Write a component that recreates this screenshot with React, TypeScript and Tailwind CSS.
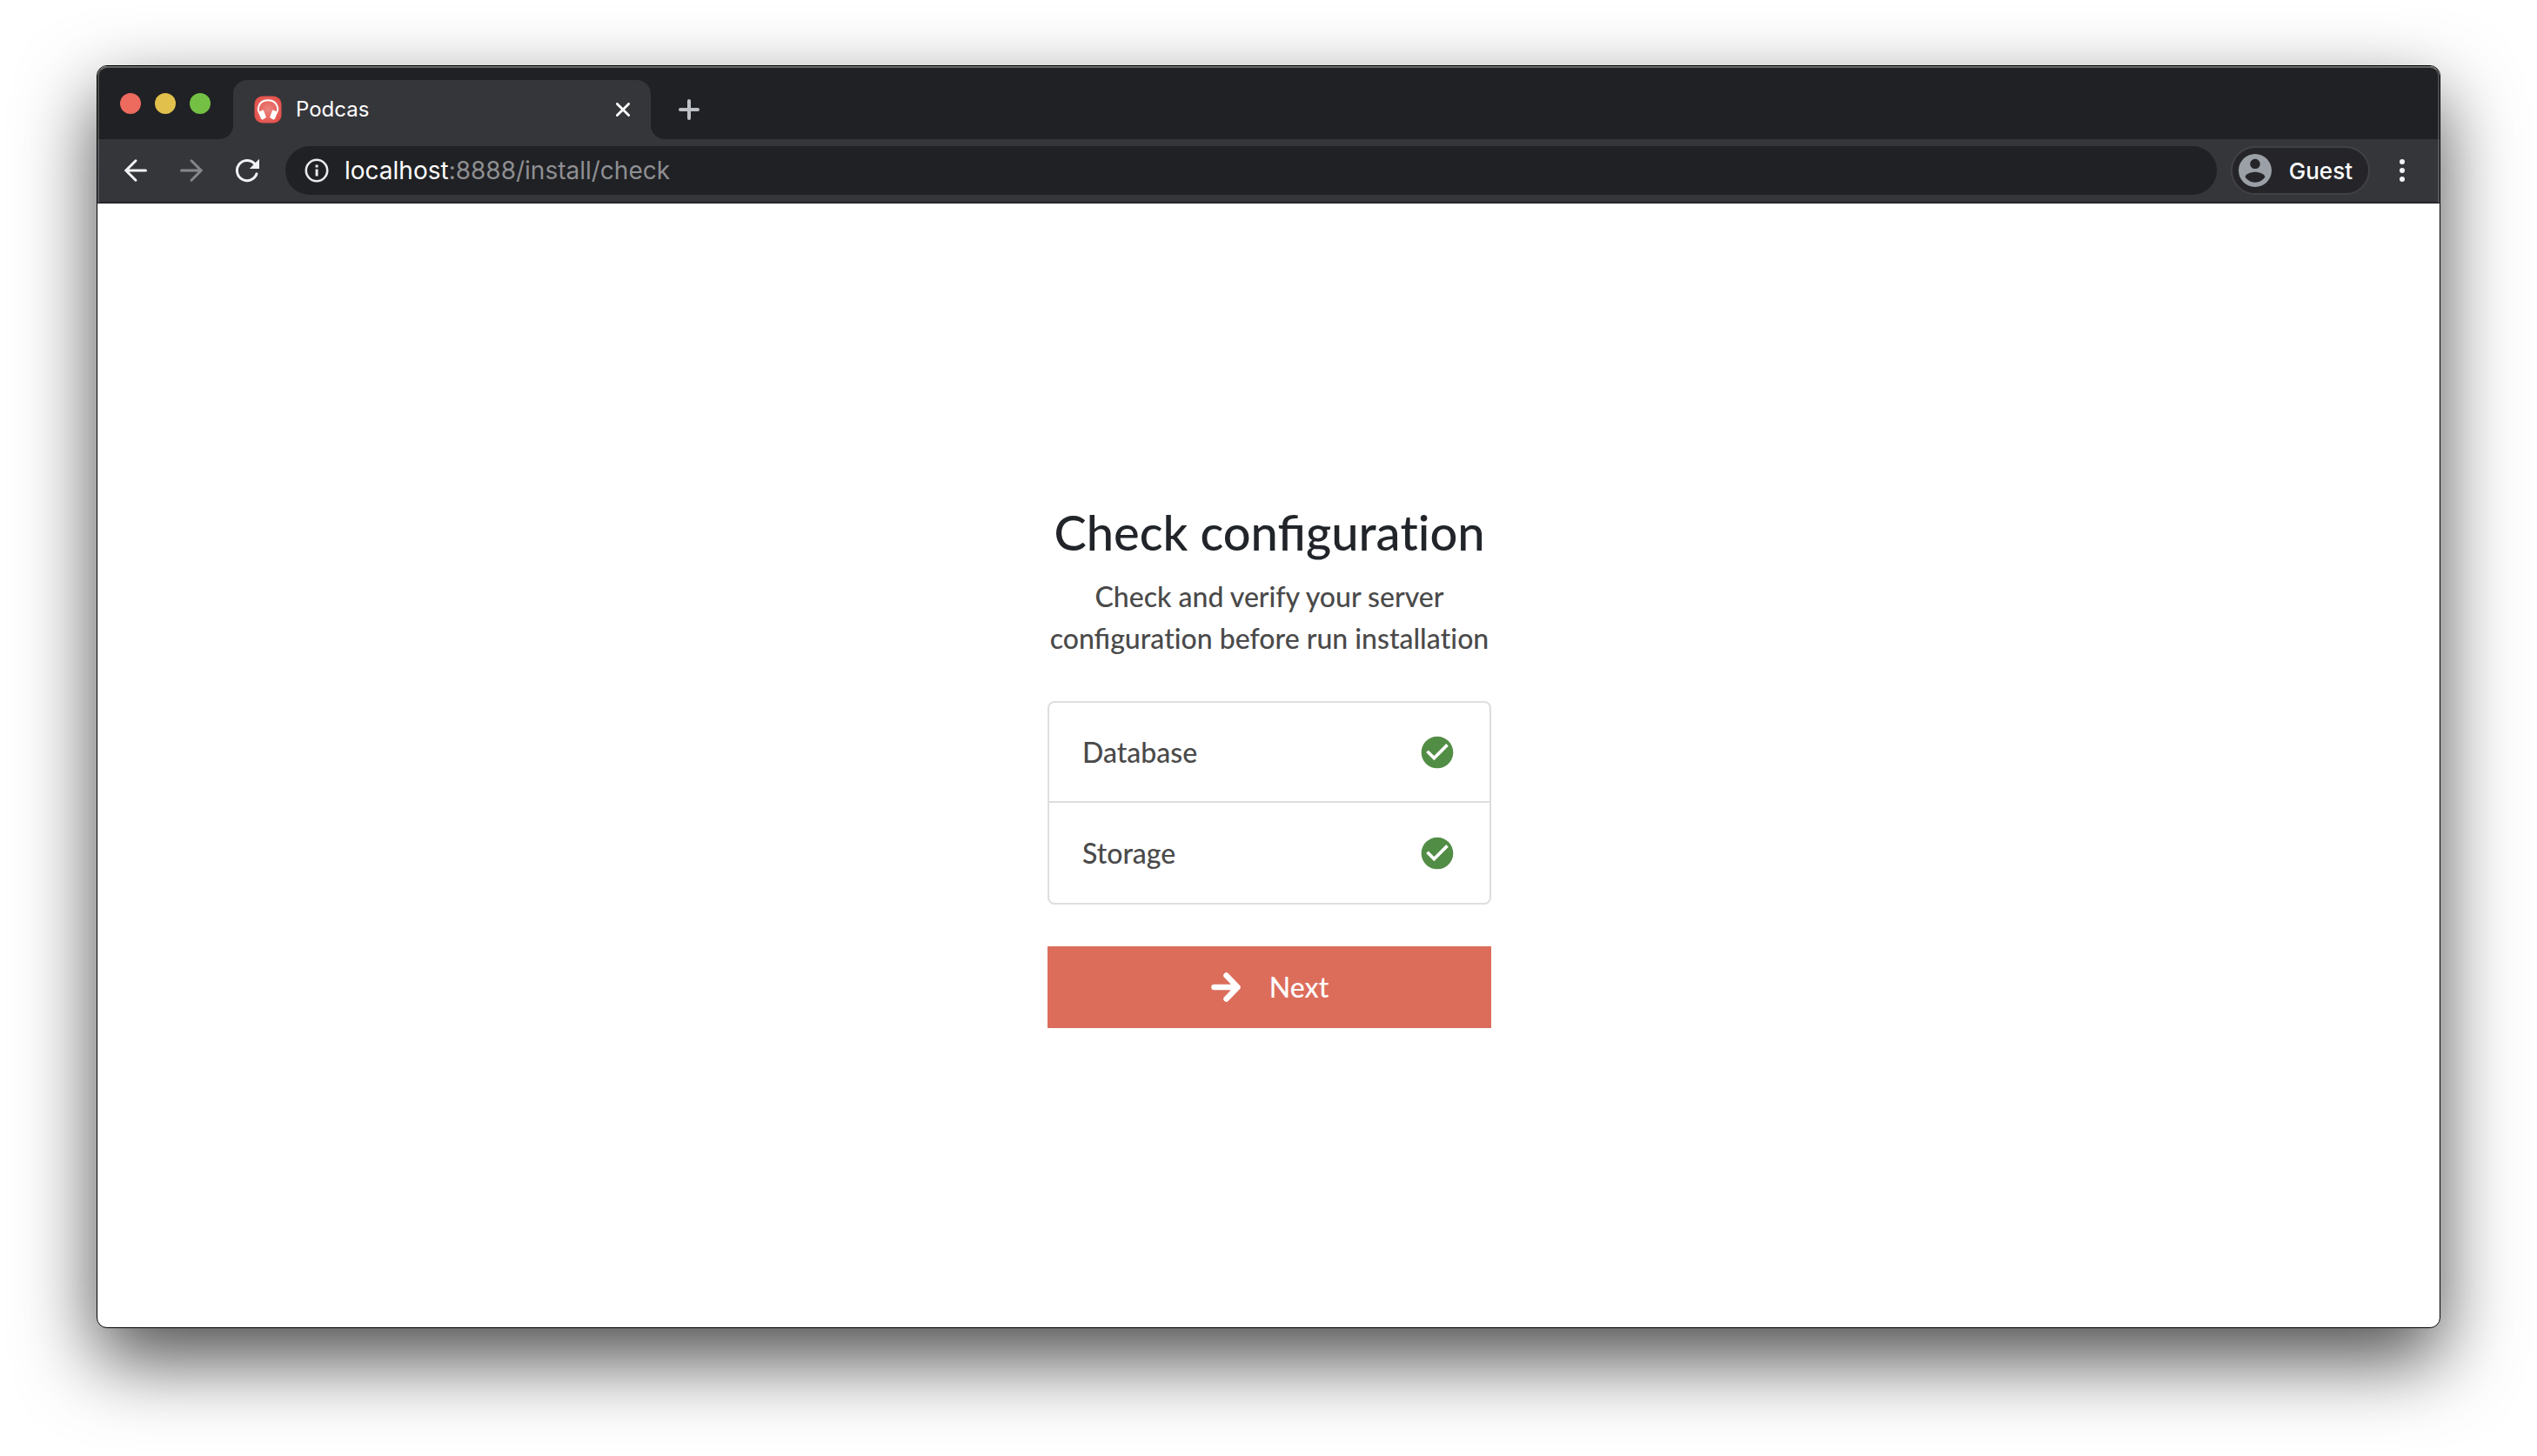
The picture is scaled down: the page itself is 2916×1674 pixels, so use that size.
import React from "react";

function BackIcon() {
  return (
    <svg viewBox="0 0 28 28" className="size-7" fill="none" stroke="currentColor" strokeWidth="3" strokeLinecap="round">
      <path d="M25.5 14H3M14 2.8L2.8 14L14 25.2" />
    </svg>
  );
}

function ForwardIcon() {
  return (
    <svg viewBox="0 0 28 28" className="size-7" fill="none" stroke="currentColor" strokeWidth="3" strokeLinecap="round">
      <path d="M2.5 14H25M14 2.8L25.2 14L14 25.2" />
    </svg>
  );
}

function ReloadIcon() {
  return (
    <svg viewBox="0 0 28 28" className="size-7" fill="none">
      <path d="M25 17.800A11.600 11.600 0 1 1 22.500 6.100" stroke="currentColor" strokeWidth="3" strokeLinecap="round" />
      <path d="M28 0.800V12H16.800Z" fill="currentColor" />
    </svg>
  );
}

function InfoIcon() {
  return (
    <svg viewBox="0 0 28 28" className="size-7 shrink-0 text-[#e8eaed]" fill="none">
      <circle cx="14" cy="14" r="12.2" stroke="currentColor" strokeWidth="2.6" />
      <path d="M12.600 7.400h3v3h-3zM12.600 12.600h3v8h-3z" fill="currentColor" />
    </svg>
  );
}

function Favicon() {
  return (
    <svg viewBox="0 0 32 32" className="size-8" fill="none">
      <defs>
        <radialGradient id="fav" cx="0.5" cy="0.5" r="0.6">
          <stop offset="0" stopColor="#ec8580" />
          <stop offset="1" stopColor="#e24b45" />
        </radialGradient>
      </defs>
      <rect x="0.5" y="0.5" width="31" height="31" rx="9" fill="url(#fav)" />
      <path d="M6.800 20.500C4.400 17.500 4.600 14.500 5.200 12.800C6.600 8 10.800 5.200 16 5.200S25.400 8 26.800 12.800C27.400 14.500 27.600 17.500 25.200 20.500" stroke="#fff" strokeWidth="2" />
      <path d="M5 19L9.800 16.600Q10.800 16.400 11.200 17.400L14 25L10 27.400Q8.800 27.600 8 26.500ZM27 19L22.200 16.600Q21.200 16.400 20.800 17.400L18 25L22 27.400Q23.200 27.600 24 26.500Z" fill="#fff" />
    </svg>
  );
}

function AvatarIcon() {
  return (
    <svg viewBox="2 2 20 20" className="size-[38px]" fill="#9aa0a6">
      <path d="M12 2C6.480 2 2 6.480 2 12s4.480 10 10 10 10-4.480 10-10S17.520 2 12 2zm0 3c1.660 0 3 1.340 3 3s-1.340 3-3 3-3-1.340-3-3 1.340-3 3-3zm0 14.200c-2.500 0-4.710-1.280-6-3.220.030-1.990 4-3.080 6-3.080 1.990 0 5.970 1.090 6 3.080-1.290 1.940-3.500 3.220-6 3.220z" />
    </svg>
  );
}

function CheckIcon() {
  return (
    <svg viewBox="0 0 24 24" className="size-11" fill="#528d45" role="img" aria-label="OK">
      <path d="M12 2C6.480 2 2 6.480 2 12s4.480 10 10 10 10-4.480 10-10S17.520 2 12 2zm-2 15l-5-5 1.410-1.410L10 14.170l7.590-7.590L19 8l-9 9z" />
    </svg>
  );
}

function NextIcon() {
  return (
    <svg viewBox="0 0 36 36" className="size-9" fill="none" stroke="currentColor" strokeWidth="6.500" strokeLinecap="round" strokeLinejoin="round">
      <path d="M4.500 18H31M18.500 4.500L31.500 18L18.500 31.500" />
    </svg>
  );
}

function TabStrip() {
  return (
    <div className="flex h-[84px] items-end rounded-t-[11px] border-x-2 border-t-2 border-x-[#4a4b4d] border-t-[#686966] bg-[#202124]">
      <div className="flex w-[154px] items-center gap-4 self-center pl-6">
        <button aria-label="Close window" className="size-6 rounded-full bg-[#ec6a5e]" />
        <button aria-label="Minimize window" className="size-6 rounded-full bg-[#e1c04c]" />
        <button aria-label="Zoom window" className="size-6 rounded-full bg-[#73c045]" />
      </div>
      <div className="relative flex h-[68px] w-[480px] items-center gap-4 rounded-t-2xl bg-[#35363a] pl-6 pr-6">
        <div className="absolute bottom-0 right-full size-4 overflow-hidden bg-[#35363a]">
          <div className="size-4 rounded-br-2xl bg-[#202124]" />
        </div>
        <div className="absolute bottom-0 left-full size-4 overflow-hidden bg-[#35363a]">
          <div className="size-4 rounded-bl-2xl bg-[#202124]" />
        </div>
        <Favicon />
        <span className="flex-1 text-2xl text-white">Podcas</span>
        <button aria-label="Close tab" className="text-white">
          <svg viewBox="0 0 16 16" className="size-4" fill="none" stroke="currentColor" strokeWidth="2.800" strokeLinecap="round">
            <path d="M1.400 1.400L14.600 14.600M14.600 1.400L1.400 14.600" />
          </svg>
        </button>
      </div>
      <button aria-label="New tab" className="flex h-[68px] items-center pl-8 text-[#bdc1c6]">
        <svg viewBox="0 0 24 24" className="size-6" fill="none" stroke="currentColor" strokeWidth="4" strokeLinecap="round">
          <path d="M2 12H22M12 2V22" />
        </svg>
      </button>
    </div>
  );
}

function Toolbar() {
  return (
    <div className="flex h-[74px] items-center gap-4 border-x-2 border-b-2 border-x-[#57585c] border-b-[#27272a] bg-[#35363a] pl-7 pr-[38px]">
      <div className="flex w-[170px] items-center gap-9 text-[#f1f3f4]">
        <button aria-label="Back"><BackIcon /></button>
        <button aria-label="Forward" className="text-[#86878a]"><ForwardIcon /></button>
        <button aria-label="Reload"><ReloadIcon /></button>
      </div>
      <div className="flex h-14 flex-1 items-center gap-[18px] rounded-full bg-[#202124] px-[22px]">
        <InfoIcon />
        <a href="#" aria-label="Address" className="text-[28px] leading-9 text-[#8e8f92]">
          <span className="text-white">localhost</span>:8888/install/check
        </a>
      </div>
      <button className="flex h-14 items-center gap-5 rounded-full border-2 border-[#414246] bg-[#252529] pl-[7px] pr-[18px] text-[26px] font-medium text-white">
        <AvatarIcon />
        Guest
      </button>
      <button aria-label="Menu" className="flex w-6 flex-col items-end gap-1">
        <span className="size-1.5 rounded-full bg-[#f1f3f4]" />
        <span className="size-1.5 rounded-full bg-[#f1f3f4]" />
        <span className="size-1.5 rounded-full bg-[#f1f3f4]" />
      </button>
    </div>
  );
}

const checks = ["Database", "Storage"];

/* Keeps the "fi" ligature while leaving "t" and "i" as separate letters. */
function Plain({ children }: { children: React.ReactNode }) {
  return <span className="[font-variant-ligatures:none]">{children}</span>;
}

export default function App() {
  return (
    <div className="flex min-h-screen flex-col bg-white px-[111px] pb-[147px] pt-[75px] font-['Inter',sans-serif]">
      <div className="flex flex-1 flex-col rounded-xl border border-black bg-white shadow-[0_36px_88px_rgba(0,0,0,0.7)]">
        <header>
          <TabStrip />
          <Toolbar />
        </header>
        <main className="flex flex-1 flex-col items-center justify-center pl-0.5 font-['Lato',sans-serif] text-[32px] font-medium leading-[48px] text-[#4a4a4a]">
          <div className="flex w-[510px] flex-col">
            <h1 className="mb-4 text-center text-[56px] leading-[68px] text-[#212529]">
              Check configura<Plain>tion</Plain>
            </h1>
            <p className="mb-12 text-center">
              Check and verify your server
              <br />
              configura<Plain>tion</Plain> before run installa<Plain>tion</Plain>
            </p>
            <ul className="mb-12 divide-y-2 divide-[#dedede] rounded-lg border-2 border-[#dedede]">
              {checks.map((name) => (
                <li key={name} className="flex h-[115px] items-center justify-between px-[38px]">
                  {name}
                  <CheckIcon />
                </li>
              ))}
            </ul>
            <button className="flex h-[94px] items-center justify-center gap-8 bg-[#dc6d5b] text-white">
              <NextIcon />
              Next
            </button>
          </div>
        </main>
      </div>
    </div>
  );
}
